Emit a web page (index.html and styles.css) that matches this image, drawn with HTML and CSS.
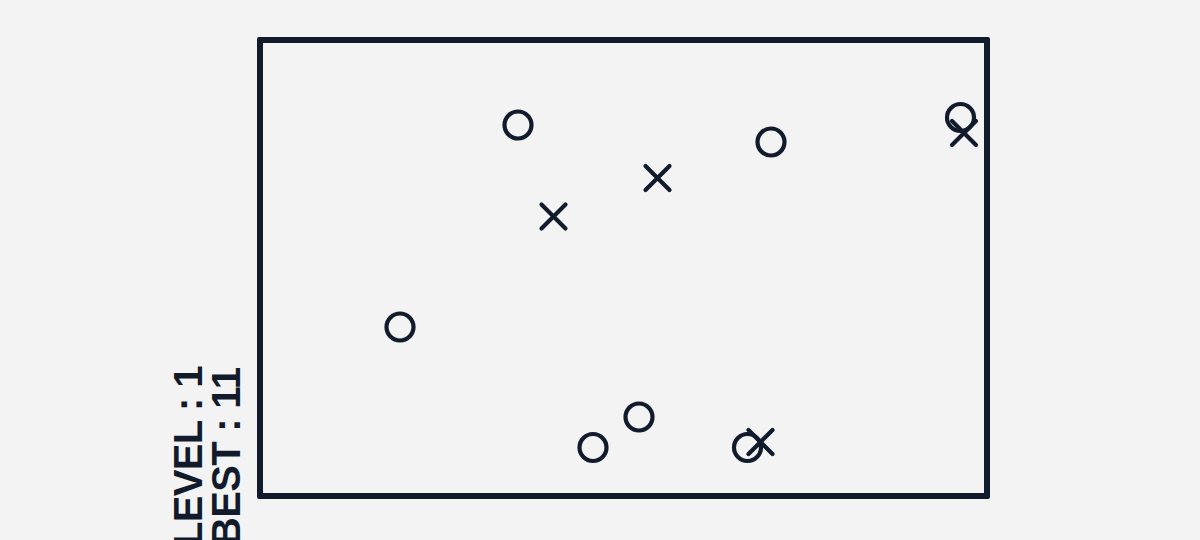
FILE: index.html
```html
<!DOCTYPE html>
<html lang="en">
<head>
    <meta charset="UTF-8">
    <meta name="viewport" content="width=device-width, initial-scale=1.0">
    <title>Dodge</title>
    <link rel="stylesheet" href="styles.css">
</head>
<body>

    <div class="game">
        <!-- Score labels -->
        <div class="stats">
            <div class="stat">LEVEL : 1</div>
            <div class="stat">BEST : 11</div>
        </div>

        <!-- Board -->
        <div class="board">
            <svg class="field" width="721" height="450" viewBox="263 43 721 450">
                <g class="rocks">
                    <circle cx="518" cy="125" r="13.5"/>
                    <circle cx="771" cy="142" r="13.5"/>
                    <circle cx="960.5" cy="117.5" r="13.5"/>
                    <circle cx="400" cy="327" r="13.5"/>
                    <circle cx="639" cy="417" r="13.5"/>
                    <circle cx="593" cy="447.5" r="13.5"/>
                    <circle cx="747.5" cy="447.5" r="13.5"/>
                </g>
                <g class="hits">
                    <path d="M645.5 166 l24 24 M669.5 166 l-24 24"/>
                    <path d="M541.5 204.5 l24 24 M565.5 204.5 l-24 24"/>
                    <path d="M952 121 l24 24 M976 121 l-24 24"/>
                    <path d="M748.5 430 l24 24 M772.5 430 l-24 24"/>
                </g>
            </svg>
        </div>
    </div>

</body>
</html>
```

FILE: styles.css
```css
/* Reset and global styling */
* {
    margin: 0;
    padding: 0;
    box-sizing: border-box;
}
body {
    font-family: 'Liberation Sans', Arial, sans-serif;
    background-color: #f3f3f3;
    color: #111b2b;
    height: 540px;
    overflow: hidden;
}

/* Game layout */
.game {
    display: flex;
    align-items: flex-start;
    padding-left: 169px;
}

/* Rotated score labels */
.stats {
    writing-mode: vertical-rl;
    transform: rotate(180deg);
    height: 200px;
    margin-top: 346px;
    font-size: 40px;
    font-weight: bold;
    line-height: 38px;
    letter-spacing: -0.7px;
    white-space: nowrap;
}

/* Board */
.board {
    margin-left: 12px;
    margin-top: 37px;
    border: 6px solid #111b2b;
    border-radius: 2px;
    line-height: 0;
}
.field {
    display: block;
}
.rocks circle {
    fill: none;
    stroke: #111b2b;
    stroke-width: 4.2;
}
.hits path {
    fill: none;
    stroke: #111b2b;
    stroke-width: 4.2;
    stroke-linecap: round;
}
```
